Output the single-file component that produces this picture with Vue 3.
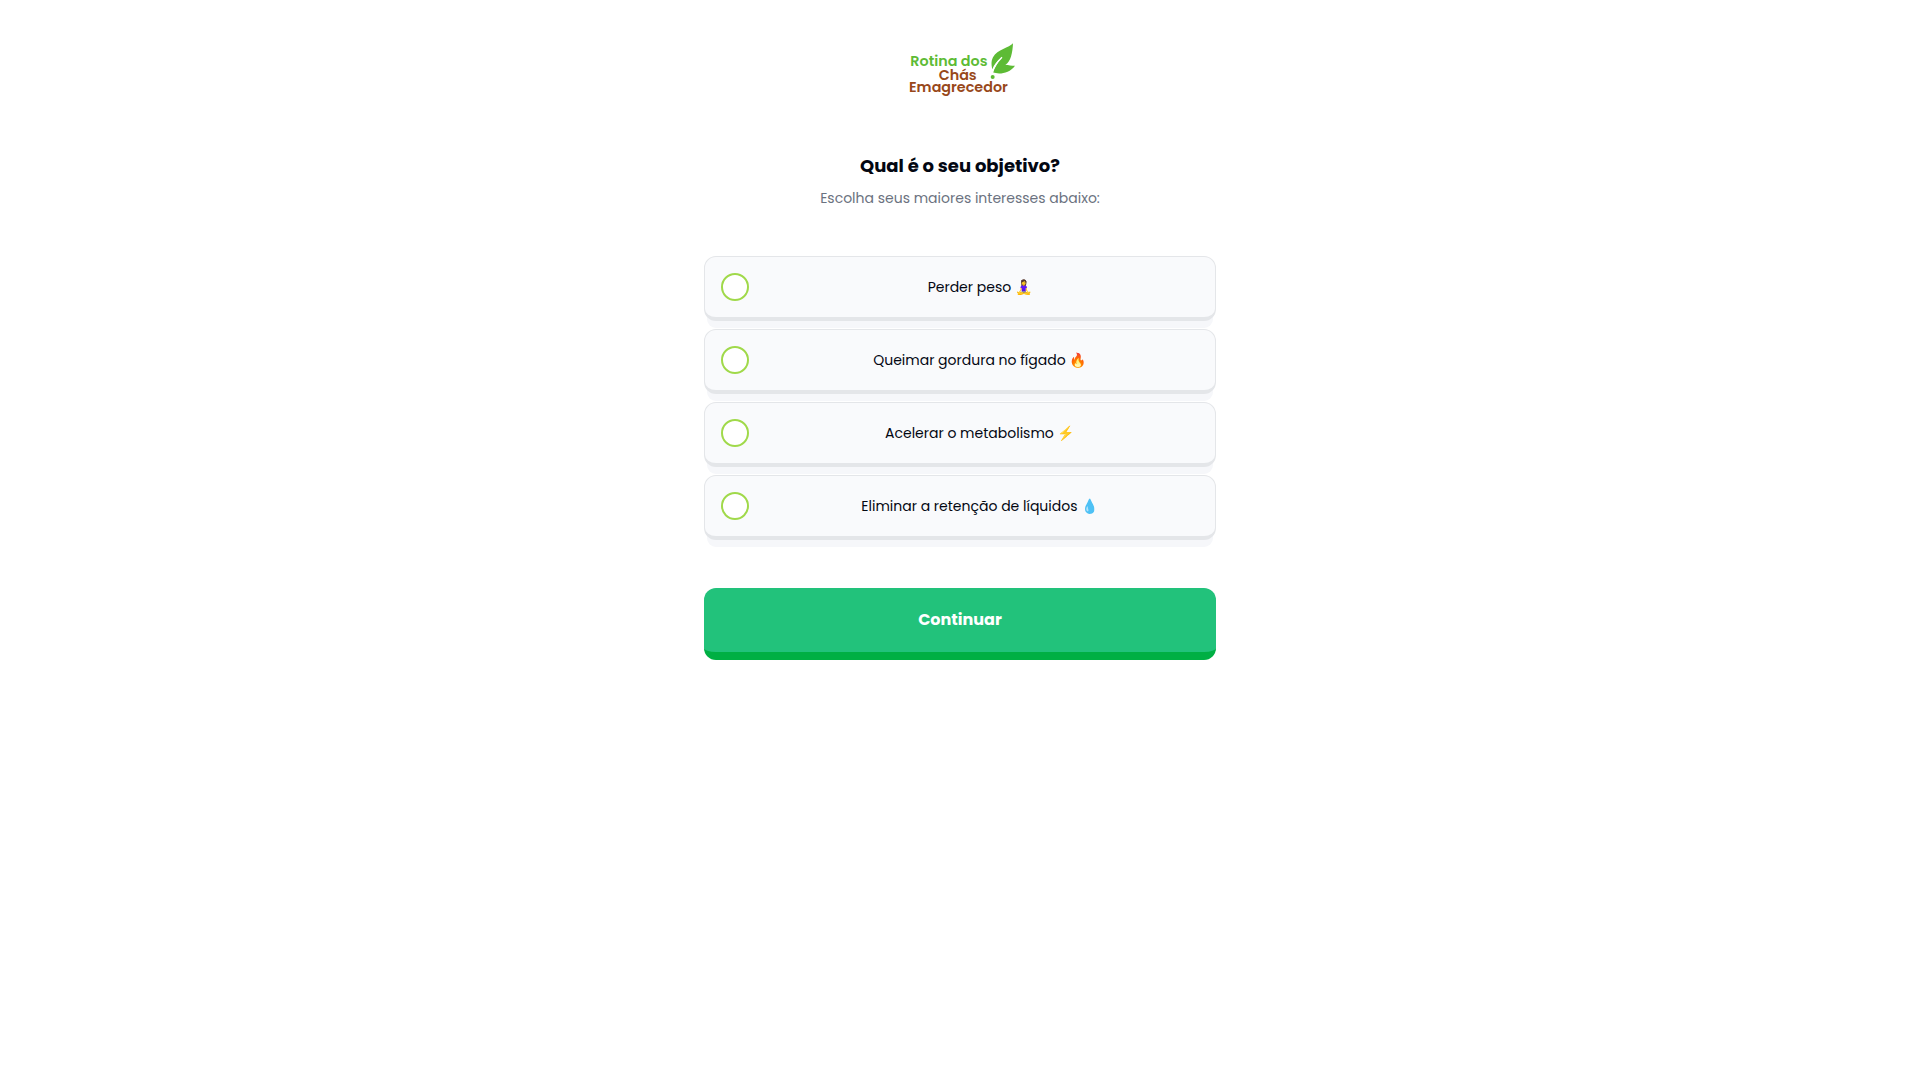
<template>
  <main class="quiz">
    <header class="quiz-header">
      <svg
        class="logo"
        viewBox="0 0 420 240"
        role="img"
        aria-label="Rotina dos Chás Emagrecedor"
      >
        <text class="logo-green" x="61" y="108">Rotina dos</text>
        <text class="logo-brown" x="146" y="151">Chás</text>
        <text class="logo-brown" x="57" y="186">Emagrecedor</text>
        <path
          class="leaf"
          d="M369 40C358 54 322 58 309 82C302 95 305 110 307 118C312 105 321 93 335 82C324 98 314 111 309 127C326 134 358 131 375 107C364 107 356 105 346 104C362 98 368 66 369 40Z"
        />
        <path class="vein" d="M307 128C311 112 320 98 336 82" />
        <circle class="leaf" cx="308" cy="141" r="6" />
      </svg>
    </header>

    <form @submit.prevent>
      <div class="intro">
        <h1>Qual é o seu objetivo?</h1>
        <p>Escolha seus maiores interesses abaixo:</p>
      </div>

      <div class="options">
        <label v-for="option in options" :key="option.id" class="option" :for="option.id">
          <input
            :id="option.id"
            v-model="selected"
            type="checkbox"
            class="check"
            :value="option.id"
          />
          <span class="option-text">{{ option.label }} {{ option.emoji }}</span>
        </label>
      </div>

      <button type="submit" class="continue">Continuar</button>
    </form>
  </main>
</template>

<script setup>
import { ref } from "vue";

const selected = ref([]);

const options = [
  { id: "peso", label: "Perder peso", emoji: "🧘‍♀️" },
  { id: "gordura", label: "Queimar gordura no fígado", emoji: "🔥" },
  { id: "metabolismo", label: "Acelerar o metabolismo", emoji: "⚡" },
  { id: "liquidos", label: "Eliminar a retenção de líquidos", emoji: "💧" },
];
</script>

<style>
body {
  background: #ffffff;
}
</style>

<style scoped>
.quiz {
  box-sizing: border-box;
  max-width: 544px;
  margin: 0 auto;
  padding: 30px 16px;
  color: #030712;
  font-family: Poppins, Inter, "Noto Color Emoji", sans-serif;
}

.quiz-header {
  display: flex;
  justify-content: center;
  margin-bottom: 42px;
}

.logo {
  width: 140px;
  height: 80px;
}

.logo text {
  font-family: Poppins, "Open Sans", sans-serif;
  font-size: 43px;
  font-weight: 600;
}

.logo-green,
.leaf {
  fill: #5dbb35;
}

.logo-brown {
  fill: #98481a;
}

.vein {
  fill: none;
  stroke: #ffffff;
  stroke-width: 4;
}

.intro {
  margin-bottom: 48px;
  text-align: center;
}

h1 {
  margin: 0 0 8px;
  font-size: 18px;
  font-weight: 700;
  line-height: 28px;
}

p {
  margin: 0;
  color: #6b7280;
  font-size: 14px;
  line-height: 20px;
}

.options {
  display: flex;
  flex-direction: column;
  gap: 8px;
  margin-bottom: 48px;
}

.option {
  display: flex;
  align-items: center;
  gap: 12px;
  padding: 16px;
  border: 1px solid #e4e6e9;
  border-bottom-width: 4px;
  border-radius: 12px;
  background: #f9fafc;
  box-shadow: 0 10px 0 -3px #f6f7fa;
  cursor: pointer;
}

.check {
  flex: none;
  width: 28px;
  height: 28px;
  margin: 0;
  border: 2px solid #a0d94a;
  border-radius: 50%;
  background: #ffffff;
  appearance: none;
  cursor: pointer;
}

.check:checked {
  background: #a0d94a;
}

.option-text {
  flex: 1;
  font-size: 14px;
  line-height: 20px;
  text-align: center;
}

.continue {
  width: 100%;
  padding: 20px 16px;
  border: 0;
  border-bottom: 8px solid #00af43;
  border-radius: 12px;
  background: #22c27b;
  color: #ffffff;
  font-family: inherit;
  font-size: 16px;
  font-weight: 700;
  line-height: 24px;
  cursor: pointer;
}
</style>
